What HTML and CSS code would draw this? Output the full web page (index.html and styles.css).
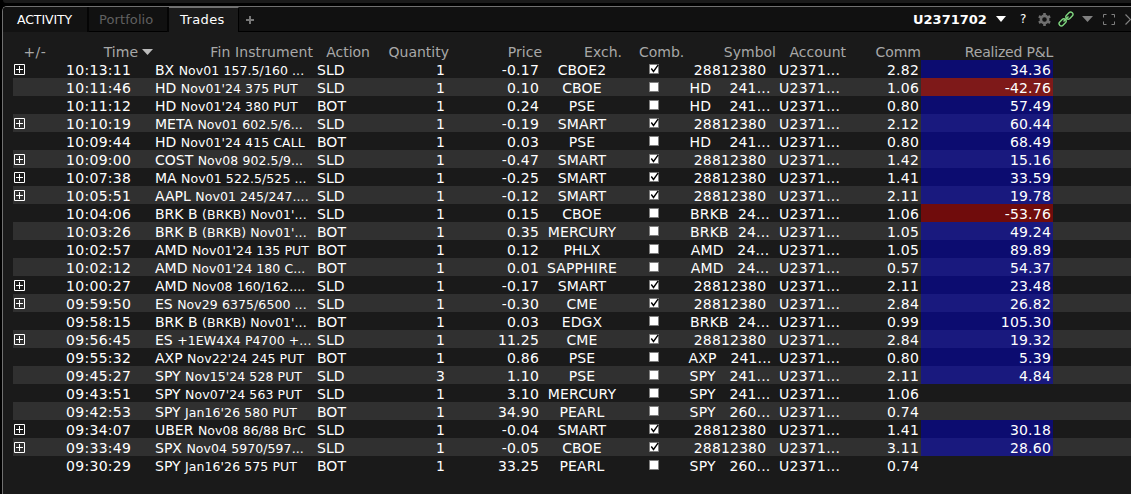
FILE: index.html
```html
<!DOCTYPE html>
<html lang="en">
<head>
  <meta charset="UTF-8"/>
  <meta name="viewport" content="width=device-width,initial-scale=1.0"/>
  <title>Activity - Trades</title>
  <link rel="stylesheet" href="styles.css">
</head>
<body>
  <div class="upper-panel"></div>

  <main class="panel">
    <header class="tabbar">
      <div class="tab title">ACTIVITY</div>
      <div class="tab muted">Portfolio</div>
      <div class="tab active">Trades</div>
      <div class="tab-add">
        <svg width="8" height="8" viewBox="0 0 8 8"><path d="M4 0v8M0 4h8" stroke="#777" stroke-width="2"/></svg>
      </div>
      <div class="tools">
        <span class="account">U2371702</span>
        <svg class="i-caret" width="10" height="6" viewBox="0 0 10 6"><path d="M0 0h10L5 6z" fill="#fff"/></svg>
        <span class="help">?</span>
        <svg class="i-gear" width="13" height="13" viewBox="0 0 13 13">
          <circle cx="6.5" cy="6.5" r="3.6" fill="none" stroke="#707070" stroke-width="2.6"/>
          <path d="M6.5 0v2.2M6.5 10.8v2.2M.9 3.25l1.9 1.1M10.2 8.65l1.9 1.1M.9 9.75l1.9-1.1M10.2 4.35l1.9-1.1" stroke="#707070" stroke-width="2.6"/>
        </svg>
        <svg class="i-link" width="16" height="16" viewBox="0 0 16 16" fill="none" stroke="#7fd67f" stroke-width="1.4">
          <rect x="-4" y="-2.3" width="8" height="4.6" rx="2.3" transform="translate(11.4 4.6) rotate(-45)"/>
          <rect x="-4" y="-2.3" width="8" height="4.6" rx="2.3" transform="translate(4.6 11.4) rotate(-45)"/>
          <path d="M5.5 10.5l5-5"/>
        </svg>
        <svg class="i-caret2" width="11" height="6" viewBox="0 0 11 6"><path d="M0 0h11L5.5 6z" fill="#808080"/></svg>
        <svg class="i-expand" width="12" height="11" viewBox="0 0 12 11"><path d="M.5 3.5v-3h3M8.5 .5h3v3M11.5 7.5v3h-3M3.5 10.5h-3v-3" fill="none" stroke="#808080"/></svg>
        <svg class="i-next" width="6" height="11" viewBox="0 0 6 11"><path d="M.5 .5l5 5-5 5" fill="none" stroke="#808080" stroke-width="1.2"/></svg>
      </div>
    </header>

    <table class="trades">
      <colgroup>
        <col class="c-exp"><col class="c-time"><col class="c-fin"><col class="c-action">
        <col class="c-qty"><col class="c-price"><col class="c-exch"><col class="c-comb">
        <col class="c-symbol"><col class="c-account"><col class="c-comm"><col class="c-pnl"><col>
      </colgroup>
      <thead>
        <tr>
          <th class="h-exp">+/-</th>
          <th>Time<svg class="sort" width="11" height="6" viewBox="0 0 11 6"><path d="M0 0h11L5.5 6z" fill="#bbb"/></svg></th>
          <th class="h-fin">Fin Instrument</th>
          <th class="h-action">Action</th>
          <th>Quantity</th>
          <th>Price</th>
          <th>Exch.</th>
          <th class="h-comb">Comb.</th>
          <th>Symbol</th>
          <th class="h-account">Account</th>
          <th>Comm</th>
          <th class="h-pnl">Realized P&amp;L</th>
          <th></th>
        </tr>
      </thead>
      <tbody id="rows"></tbody>
    </table>
  </main>

  <script src="trades.js"></script>
</body>
</html>
```
FILE: styles.css
```css
:root {
  --panel: #1a1a1a;
  --stripe: #303030;
  --bar: #111111;
  --edge: #707070;
  --label: #a8a8a8;
}
* {
  box-sizing: border-box;
  margin: 0;
  padding: 0;
}
body {
  height: 494px;
  overflow: hidden;
  background: #000;
  color: #fff;
  font-family: "DejaVu Sans", Verdana, sans-serif;
  font-size: 14px;
}
svg {
  display: block;
  flex: none;
}
.upper-panel {
  height: 3px;
  margin-left: 3px;
  background: var(--panel);
  border-radius: 0 0 0 4px;
}
.panel {
  height: 488px;
  margin: 3px 0 0 2px;
  background: var(--panel);
  border-top: 1px solid var(--edge);
  border-left: 1px solid var(--edge);
  border-top-left-radius: 5px;
  overflow: hidden;
}

/* tabs */
.tabbar {
  display: flex;
  height: 25px;
  background: var(--bar);
  border-bottom: 1px solid #000;
}
.tab {
  height: 25px;
  line-height: 26px;
  font-size: 13px;
  border-right: 2px solid #050505;
}
.tab.title {
  width: 86px;
  padding-left: 14px;
  font-size: 12.5px;
  letter-spacing: -0.1px;
  background: #121212;
}
.tab.muted {
  width: 80px;
  padding-left: 10px;
  color: #606060;
  letter-spacing: 0.1px;
}
.tab.active {
  width: 70px;
  padding-left: 11px;
  line-height: 24px;
  letter-spacing: 0.4px;
  background: var(--panel);
  border-top: 1px solid var(--edge);
  border-right: 1px solid #000;
}
.tab-add {
  padding: 9px 0 0 7px;
}
.tools {
  display: flex;
  align-items: center;
  margin-left: auto;
}
.account {
  font-size: 13px;
  font-weight: bold;
  width: 72px;
}
.i-caret { margin-left: 11px; }
.help {
  width: 8px;
  margin-left: 14px;
  font-size: 12px;
}
.i-gear { margin-left: 10px; }
.i-link { margin-left: 7px; }
.i-caret2 { margin-left: 8px; }
.i-expand { margin-left: 10px; }
.i-next { margin-left: 10px; }

/* trades table */
.trades {
  width: 1118px;
  margin: 12px 0 0 10px;
  table-layout: fixed;
  border-collapse: collapse;
}
.c-exp { width: 34px; }
.c-time { width: 106px; }
.c-fin { width: 162px; }
.c-action { width: 57px; }
.c-qty { width: 77px; }
.c-price { width: 93px; }
.c-exch { width: 80px; }
.c-comb { width: 63px; }
.c-symbol { width: 91px; }
.c-account { width: 76px; }
.c-comm { width: 69px; }
.c-pnl { width: 132px; }
th {
  height: 16px;
  line-height: 16px;
  color: var(--label);
  font-weight: normal;
  text-align: right;
  white-space: nowrap;
}
td {
  height: 18px;
  padding-top: 2px;
  line-height: 16px;
  white-space: pre;
  overflow: hidden;
}
tbody tr:nth-child(even) {
  background: var(--stripe);
}
.h-exp {
  padding-right: 1px;
  letter-spacing: 0.3px;
}
.h-fin {
  padding-right: 2px;
  letter-spacing: 0.1px;
}
.h-action { padding-right: 2px; }
.h-comb {
  text-align: left;
  padding-left: 17px;
}
.h-account { padding-right: 6px; }
.h-pnl { letter-spacing: -0.2px; }
.sort {
  display: inline-block;
  margin: 0 0 2px 4px;
}
.expand {
  margin: 0 0 1px 1px;
}
.time {
  padding-left: 19px;
  letter-spacing: 0.3px;
}
.fin { padding-left: 2px; }
.fin small {
  font-size: 12.5px;
  line-height: 1;
  letter-spacing: 0.08px;
}
.action { padding-left: 2px; }
.qty { text-align: right; padding-right: 4px; }
.price { text-align: right; padding-right: 3px; }
.exch {
  text-align: center;
  letter-spacing: 0.15px;
}
.symbol {
  text-align: center;
  padding-right: 1px;
  letter-spacing: 0.15px;
}
.acct {
  padding-left: 3px;
  letter-spacing: 0.25px;
}
.num { text-align: right; padding-right: 2px; }
.price,
.num { letter-spacing: 0.2px; }
.check {
  width: 10px;
  height: 10px;
  margin: 0 auto 2px;
}
.gain { background: #0c0c70; }
.loss { background: #700c0c; }
tr:nth-child(even) .gain { background: #19197e; }
tr:nth-child(even) .loss { background: #7e1919; }
```
FILE: trades.js
```js
// expandable, time, ticker, contract, action, qty, price, exchange, combo, symbol, comm, pnl
const trades = [
  [1, '10:13:11', 'BX', 'Nov01 157.5/160 ...', 'SLD', 1, '-0.17', 'CBOE2', 1, '28812380', '2.82', '34.36'],
  [0, '10:11:46', 'HD', "Nov01'24 375 PUT", 'SLD', 1, '0.10', 'CBOE', 0, 'HD    241...', '1.06', '-42.76'],
  [0, '10:11:12', 'HD', "Nov01'24 380 PUT", 'BOT', 1, '0.24', 'PSE', 0, 'HD    241...', '0.80', '57.49'],
  [1, '10:10:19', 'META', 'Nov01 602.5/6...', 'SLD', 1, '-0.19', 'SMART', 1, '28812380', '2.12', '60.44'],
  [0, '10:09:44', 'HD', "Nov01'24 415 CALL", 'BOT', 1, '0.03', 'PSE', 0, 'HD    241...', '0.80', '68.49'],
  [1, '10:09:00', 'COST', 'Nov08 902.5/9...', 'SLD', 1, '-0.47', 'SMART', 1, '28812380', '1.42', '15.16'],
  [1, '10:07:38', 'MA', 'Nov01 522.5/525 ...', 'SLD', 1, '-0.25', 'SMART', 1, '28812380', '1.41', '33.59'],
  [1, '10:05:51', 'AAPL', 'Nov01 245/247....', 'SLD', 1, '-0.12', 'SMART', 1, '28812380', '2.11', '19.78'],
  [0, '10:04:06', 'BRK B', "(BRKB) Nov01'...", 'SLD', 1, '0.15', 'CBOE', 0, 'BRKB  24...', '1.06', '-53.76'],
  [0, '10:03:26', 'BRK B', "(BRKB) Nov01'...", 'BOT', 1, '0.35', 'MERCURY', 0, 'BRKB  24...', '1.05', '49.24'],
  [0, '10:02:57', 'AMD', "Nov01'24 135 PUT", 'BOT', 1, '0.12', 'PHLX', 0, 'AMD   24...', '1.05', '89.89'],
  [0, '10:02:12', 'AMD', "Nov01'24 180 C...", 'BOT', 1, '0.01', 'SAPPHIRE', 0, 'AMD   24...', '0.57', '54.37'],
  [1, '10:00:27', 'AMD', 'Nov08 160/162....', 'SLD', 1, '-0.17', 'SMART', 1, '28812380', '2.11', '23.48'],
  [1, '09:59:50', 'ES', 'Nov29 6375/6500 ...', 'SLD', 1, '-0.30', 'CME', 1, '28812380', '2.84', '26.82'],
  [0, '09:58:15', 'BRK B', "(BRKB) Nov01'...", 'BOT', 1, '0.03', 'EDGX', 0, 'BRKB  24...', '0.99', '105.30'],
  [1, '09:56:45', 'ES', '+1EW4X4 P4700 +...', 'SLD', 1, '11.25', 'CME', 1, '28812380', '2.84', '19.32'],
  [0, '09:55:32', 'AXP', "Nov22'24 245 PUT", 'BOT', 1, '0.86', 'PSE', 0, 'AXP   241...', '0.80', '5.39'],
  [0, '09:45:27', 'SPY', "Nov15'24 528 PUT", 'SLD', 3, '1.10', 'PSE', 0, 'SPY   241...', '2.11', '4.84'],
  [0, '09:43:51', 'SPY', "Nov07'24 563 PUT", 'SLD', 1, '3.10', 'MERCURY', 0, 'SPY   241...', '1.06', ''],
  [0, '09:42:53', 'SPY', "Jan16'26 580 PUT", 'BOT', 1, '34.90', 'PEARL', 0, 'SPY   260...', '0.74', ''],
  [1, '09:34:07', 'UBER', 'Nov08 86/88 BrC', 'SLD', 1, '-0.04', 'SMART', 1, '28812380', '1.41', '30.18'],
  [1, '09:33:49', 'SPX', 'Nov04 5970/597...', 'SLD', 1, '-0.05', 'CBOE', 1, '28812380', '3.11', '28.60'],
  [0, '09:30:29', 'SPY', "Jan16'26 575 PUT", 'BOT', 1, '33.25', 'PEARL', 0, 'SPY   260...', '0.74', '']
];

const plus = '<svg class="expand" width="11" height="11" viewBox="0 0 11 11"><path d="M.5 .5h10v10h-10zM5.5 2v7M2 5.5h7" fill="none" stroke="#fff"/></svg>';

function checkbox(on) {
  const tick = on ? '<path d="M2.3 4.5l2.2 3L9.2 .8" fill="none" stroke="#000" stroke-width="1.4"/>' : '';
  return '<svg class="check" viewBox="0 0 10 10"><path d="M.5 .5h9v9h-9z" fill="#fff" stroke="#808080"/>' + tick + '</svg>';
}

function pnlClass(v) {
  if (!v) return '';
  return v[0] === '-' ? 'loss' : 'gain';
}

document.getElementById('rows').innerHTML = trades.map(t => `<tr>
  <td>${t[0] ? plus : ''}</td>
  <td class="time">${t[1]}</td>
  <td class="fin">${t[2]} <small>${t[3]}</small></td>
  <td class="action">${t[4]}</td>
  <td class="qty">${t[5]}</td>
  <td class="price">${t[6]}</td>
  <td class="exch">${t[7]}</td>
  <td>${checkbox(t[8])}</td>
  <td class="symbol">${t[9]}</td>
  <td class="acct">U2371...</td>
  <td class="num">${t[10]}</td>
  <td class="num ${pnlClass(t[11])}">${t[11]}</td>
  <td></td>
</tr>`).join('');
```
